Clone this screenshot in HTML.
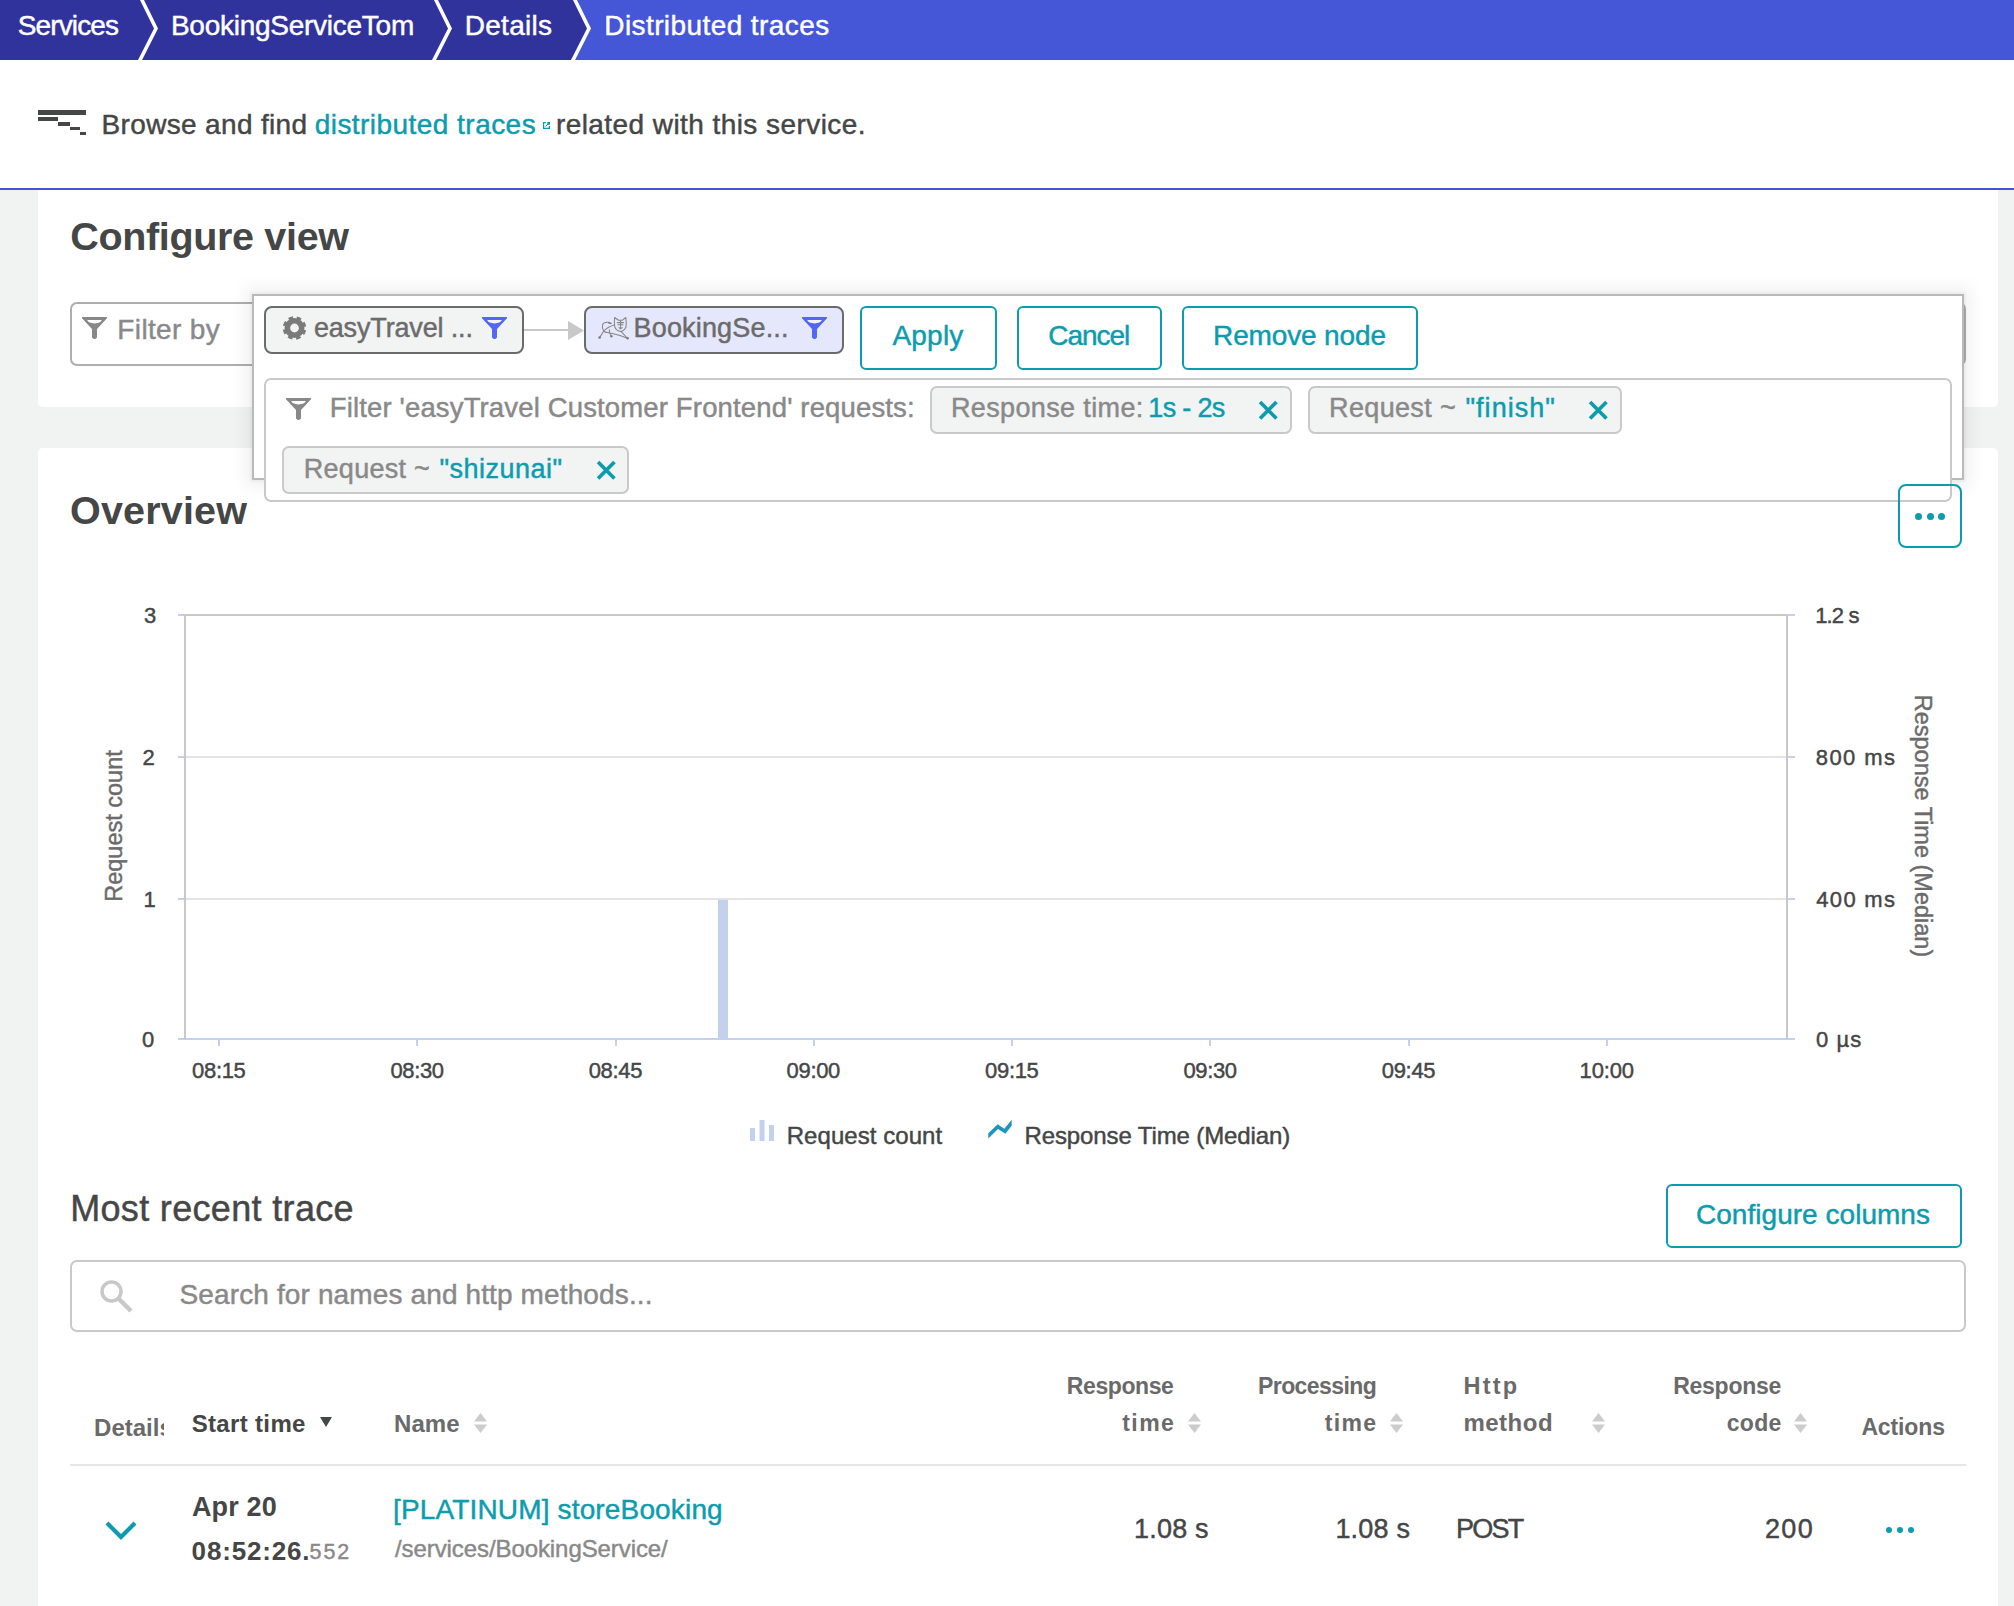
<!DOCTYPE html>
<html><head><meta charset="utf-8"><style>
html,body{margin:0;padding:0}
body{width:2014px;height:1606px;overflow:hidden;position:relative;background:#f1f3f3;font-family:"Liberation Sans", sans-serif}
.t{position:absolute;white-space:nowrap;line-height:1;font-family:"Liberation Sans", sans-serif;-webkit-text-stroke:0.45px currentColor}
.r{position:absolute}
</style></head><body>
<svg class="r" style="left:0;top:0" width="2014" height="60" viewBox="0 0 2014 60">
<rect x="0" y="0" width="2014" height="60" fill="#4556d7"/>
<polygon points="0,0 574,0 589,28.5 572,60 0,60" fill="#31339d"/>
<g fill="none" stroke="#fff" stroke-width="3.6" stroke-linejoin="miter" stroke-miterlimit="10">
<polyline points="141,-2 156,28.5 139,62"/>
<polyline points="435,-2 450,28.5 433,62"/>
<polyline points="574,-2 589,28.5 572,62"/>
</g></svg>
<div class="t" style="left:17.65px;top:12.30px;font-size:28px;color:#fff;letter-spacing:-0.861px;">Services</div>
<div class="t" style="left:170.95px;top:12.30px;font-size:28px;color:#fff;letter-spacing:-0.261px;">BookingServiceTom</div>
<div class="t" style="left:464.75px;top:12.30px;font-size:28px;color:#fff;letter-spacing:0.271px;">Details</div>
<div class="t" style="left:604.25px;top:12.30px;font-size:28px;color:#fff;letter-spacing:0.416px;">Distributed traces</div>
<div class="r" style="left:0px;top:60px;width:2014px;height:128px;background:#fff"></div>
<div class="r" style="left:0px;top:188px;width:2014px;height:2px;background:#4452d3"></div>
<div class="r" style="left:38px;top:110px;width:48px;height:4.700000000000003px;background:#454646"></div>
<div class="r" style="left:38px;top:117.4px;width:20.4px;height:3.299999999999997px;background:#454646"></div>
<div class="r" style="left:58.4px;top:122.3px;width:11.800000000000004px;height:3.299999999999997px;background:#454646"></div>
<div class="r" style="left:70.2px;top:127px;width:10.0px;height:3.3000000000000114px;background:#454646"></div>
<div class="r" style="left:80.2px;top:132px;width:5.799999999999997px;height:3.3000000000000114px;background:#454646"></div>
<div class="t" style="left:101.55px;top:110.80px;font-size:28px;color:#454646;letter-spacing:0.339px;">Browse and find</div>
<div class="t" style="left:314.68px;top:110.80px;font-size:28px;color:#0b9cae;letter-spacing:0.457px;">distributed traces</div>
<div class="t" style="left:555.92px;top:110.80px;font-size:28px;color:#454646;letter-spacing:0.433px;">related with this service.</div>
<svg class="r" style="left:542.5px;top:121.5px" width="7" height="7" viewBox="0 0 7 7"><path d="M2.8 0.6 H0.6 V6.4 H6.4 V4" fill="none" stroke="#0b9cae" stroke-width="1.2"/><path d="M2.5 4.5 L5.5 1.5" stroke="#0b9cae" stroke-width="1"/><rect x="4.3" y="0" width="2.7" height="2.7" fill="#0b9cae"/></svg>
<div class="r" style="left:38px;top:190px;width:1960px;height:217px;background:#fff;border-radius:0 0 5px 5px"></div>
<div class="r" style="left:38px;top:448px;width:1960px;height:1252px;background:#fff;border-radius:5px"></div>
<div class="t" style="left:70.28px;top:216.56px;font-size:39.5px;color:#454646;letter-spacing:-0.338px;font-weight:700;-webkit-text-stroke:0;">Configure view</div>
<div class="r" style="left:70px;top:302px;width:1896px;height:64px;border:2.5px solid #aeaeae;border-radius:7px;box-sizing:border-box;background:#fff"></div>
<svg class="r" style="left:81.8px;top:317px" width="25" height="23" viewBox="0 0 25 23"><path d="M0 0 H25 V1.2 L15 12 V20.5 Q12.5 23.5 10 20.5 V12 L0 1.2 Z" fill="#888"/><path d="M5.2 3 H19.8 Q18.5 6.2 12.5 6.4 Q6.5 6.2 5.2 3 Z" fill="#fff"/></svg>
<div class="t" style="left:117.35px;top:315.90px;font-size:28px;color:#898989;letter-spacing:0.356px;">Filter by</div>
<div class="t" style="left:69.97px;top:490.56px;font-size:39.5px;color:#454646;letter-spacing:0.182px;font-weight:700;-webkit-text-stroke:0;">Overview</div>
<div class="r" style="left:252px;top:294px;width:1712px;height:186px;border:2px solid #b9b9b9;box-sizing:border-box;background:#fff;box-shadow:0 0 2px 2px rgba(0,0,0,0.035), 0 0 16px 7px rgba(0,0,0,0.06)"></div>
<div class="r" style="left:264px;top:306px;width:260px;height:48px;border:2.5px solid #6b6b6b;border-radius:8px;box-sizing:border-box;background:#f2f3f3"></div>
<svg class="r" style="left:281.5px;top:316px" width="25" height="24" viewBox="0 0 25 24"><g transform="translate(12.5,12)" fill="none" stroke="#7a7a7a"><circle r="7.2" stroke-width="5.6"/><circle r="10" stroke-width="3.6" stroke-dasharray="4.4 3.45" stroke-linecap="butt" transform="rotate(10.5)"/></g></svg>
<div class="t" style="left:313.88px;top:314.94px;font-size:27px;color:#6b6b6b;letter-spacing:-0.152px;">easyTravel ...</div>
<svg class="r" style="left:482px;top:316.5px" width="25" height="23" viewBox="0 0 25 23"><path d="M0 0 H25 V1.2 L15 12 V20.5 Q12.5 23.5 10 20.5 V12 L0 1.2 Z" fill="#5366f6"/><path d="M5.2 3 H19.8 Q18.5 6.2 12.5 6.4 Q6.5 6.2 5.2 3 Z" fill="#f2f3f3"/></svg>
<div class="r" style="left:524px;top:329px;width:45px;height:2px;background:#c8c8c8"></div>
<svg class="r" style="left:568px;top:321px" width="17" height="19" viewBox="0 0 17 19"><path d="M0 0 L16 9.5 L0 19 Z" fill="#c8c8c8"/></svg>
<div class="r" style="left:584px;top:306px;width:260px;height:48px;border:2.5px solid #6b6b6b;border-radius:8px;box-sizing:border-box;background:#e5e8fd"></div>
<svg class="r" style="left:590px;top:310px" width="50" height="35" viewBox="0 0 50 35"><g fill="none" stroke="#858585" stroke-width="1.05" stroke-linejoin="round" stroke-linecap="round">
<path d="M24.6 7.5 L28.5 10.2 L32.5 10.2 L35.8 7.5 Q36.6 12.5 36 17 Q34 21 30.8 21.5 Q26.5 21 24.8 17 Q24 12 24.6 7.5 Z"/>
<path d="M27.3 12.6 h6.2 M28 14.8 h5 M29 17.6 L30.6 18.8 L32.2 17.6 M30.6 10.6 V18.5"/>
<path d="M21.3 13.4 L18.8 12.4 Q13.8 11.8 12.6 14.5 Q11.9 18 13.5 20.5 Q14.8 22 16 22.5"/>
<path d="M24.2 15 Q17.5 17 13.8 21 L9.6 27.6"/>
<path d="M15 22 Q22 23 30 25.6 L37.6 28.3"/>
<path d="M31 21.4 L37.2 28"/>
<path d="M19.4 19.8 V22.6 L21.6 26.4"/>
</g><g fill="#7d7d7d"><path d="M18.5 11.6 L22 13.4 L18.5 14 Z"/><circle cx="9.6" cy="27.5" r="1.3"/><circle cx="21.4" cy="26.2" r="1.2"/><circle cx="37.6" cy="28.2" r="1.3"/></g></svg>
<div class="t" style="left:633.55px;top:314.94px;font-size:27px;color:#6b6b6b;letter-spacing:0.166px;">BookingSe...</div>
<svg class="r" style="left:802px;top:316.5px" width="25" height="23" viewBox="0 0 25 23"><path d="M0 0 H25 V1.2 L15 12 V20.5 Q12.5 23.5 10 20.5 V12 L0 1.2 Z" fill="#5366f6"/><path d="M5.2 3 H19.8 Q18.5 6.2 12.5 6.4 Q6.5 6.2 5.2 3 Z" fill="#f2f3f3"/></svg>
<div class="r" style="left:860px;top:306px;width:137px;height:64px;border:2.5px solid #0b9cae;border-radius:6px;box-sizing:border-box;background:#fff"></div>
<div class="t" style="left:892.38px;top:321.90px;font-size:28px;color:#0b9cae;letter-spacing:0.238px;">Apply</div>
<div class="r" style="left:1017px;top:306px;width:145px;height:64px;border:2.5px solid #0b9cae;border-radius:6px;box-sizing:border-box;background:#fff"></div>
<div class="t" style="left:1048.33px;top:322.00px;font-size:28px;color:#0b9cae;letter-spacing:-1.040px;">Cancel</div>
<div class="r" style="left:1182px;top:306px;width:236px;height:64px;border:2.5px solid #0b9cae;border-radius:6px;box-sizing:border-box;background:#fff"></div>
<div class="t" style="left:1213.05px;top:322.00px;font-size:28px;color:#0b9cae;letter-spacing:-0.138px;">Remove node</div>
<div class="r" style="left:264px;top:378px;width:1688px;height:124px;border:2px solid #c9c9c9;border-radius:7px;box-sizing:border-box;background:#fff"></div>
<svg class="r" style="left:285.8px;top:398.4px" width="25" height="23" viewBox="0 0 25 23"><path d="M0 0 H25 V1.2 L15 12 V20.5 Q12.5 23.5 10 20.5 V12 L0 1.2 Z" fill="#888"/><path d="M5.2 3 H19.8 Q18.5 6.2 12.5 6.4 Q6.5 6.2 5.2 3 Z" fill="#fff"/></svg>
<div class="t" style="left:329.75px;top:394.32px;font-size:27.5px;color:#898989;letter-spacing:0.149px;">Filter &#39;easyTravel Customer Frontend&#39; requests:</div>
<div class="r" style="left:930px;top:386px;width:362px;height:48px;border:2px solid #c9c9c9;border-radius:7px;box-sizing:border-box;background:#f2f3f3"></div>
<div class="t" style="left:950.95px;top:395.34px;font-size:27px;color:#898989;letter-spacing:0.371px;">Response time:</div>
<div class="t" style="left:1148.30px;top:395.34px;font-size:27px;color:#0b9cae;letter-spacing:-0.667px;">1s - 2s</div>
<svg class="r" style="left:1257.5px;top:400px" width="20.5" height="20.5" viewBox="0 0 20 20"><path d="M2 2 L18 18 M18 2 L2 18" stroke="#0b9cae" stroke-width="3.6" stroke-linecap="butt"/></svg>
<div class="r" style="left:1308px;top:386px;width:314px;height:48px;border:2px solid #c9c9c9;border-radius:7px;box-sizing:border-box;background:#f2f3f3"></div>
<div class="t" style="left:1329.05px;top:395.34px;font-size:27px;color:#898989;letter-spacing:0.350px;">Request ~</div>
<div class="t" style="left:1465.47px;top:395.34px;font-size:27px;color:#0b9cae;letter-spacing:1.029px;">"finish"</div>
<svg class="r" style="left:1588px;top:400px" width="20.5" height="20.5" viewBox="0 0 20 20"><path d="M2 2 L18 18 M18 2 L2 18" stroke="#0b9cae" stroke-width="3.6" stroke-linecap="butt"/></svg>
<div class="r" style="left:282px;top:446px;width:347px;height:48px;border:2px solid #c9c9c9;border-radius:7px;box-sizing:border-box;background:#f2f3f3"></div>
<div class="t" style="left:303.75px;top:455.64px;font-size:27px;color:#898989;letter-spacing:0.288px;">Request ~</div>
<div class="t" style="left:439.57px;top:455.64px;font-size:27px;color:#0b9cae;letter-spacing:0.467px;">"shizunai"</div>
<svg class="r" style="left:596px;top:460px" width="20.5" height="20.5" viewBox="0 0 20 20"><path d="M2 2 L18 18 M18 2 L2 18" stroke="#0b9cae" stroke-width="3.6" stroke-linecap="butt"/></svg>
<div class="r" style="left:1898px;top:484px;width:64px;height:64px;border:2.5px solid #0b9cae;border-radius:8px;box-sizing:border-box"></div>
<div class="r" style="left:1915.0px;top:512.5px;width:7px;height:7px;border-radius:50%;background:#0b9cae"></div>
<div class="r" style="left:1926.5px;top:512.5px;width:7px;height:7px;border-radius:50%;background:#0b9cae"></div>
<div class="r" style="left:1938.0px;top:512.5px;width:7px;height:7px;border-radius:50%;background:#0b9cae"></div>
<div class="r" style="left:178px;top:614px;width:1617px;height:2px;background:#c9c9c9"></div>
<div class="r" style="left:178px;top:756px;width:1617px;height:2px;background:#e3e3e3"></div>
<div class="r" style="left:178px;top:897.8px;width:1617px;height:2.0px;background:#e3e3e3"></div>
<div class="r" style="left:178px;top:1038px;width:1617px;height:2px;background:#c3d1ee"></div>
<div class="r" style="left:178px;top:613.8px;width:7px;height:2.0px;background:#c3d1ee"></div>
<div class="r" style="left:1787px;top:613.8px;width:8px;height:2.0px;background:#c3d1ee"></div>
<div class="r" style="left:178px;top:756px;width:7px;height:2px;background:#c3d1ee"></div>
<div class="r" style="left:1787px;top:756px;width:8px;height:2px;background:#c3d1ee"></div>
<div class="r" style="left:178px;top:897.8px;width:7px;height:2.0px;background:#c3d1ee"></div>
<div class="r" style="left:1787px;top:897.8px;width:8px;height:2.0px;background:#c3d1ee"></div>
<div class="r" style="left:184px;top:614px;width:2px;height:425px;background:#c9c9c9"></div>
<div class="r" style="left:1786px;top:614px;width:2px;height:425px;background:#c9c9c9"></div>
<div class="r" style="left:718px;top:900px;width:10px;height:138px;background:#c3d1ee"></div>
<div class="r" style="left:218px;top:1040px;width:2px;height:6px;background:#c3d1ee"></div>
<div class="t" style="left:192.12px;top:1059.58px;font-size:22px;color:#454646;letter-spacing:-0.344px;">08:15</div>
<div class="r" style="left:416.3px;top:1040px;width:2.0px;height:6px;background:#c3d1ee"></div>
<div class="t" style="left:390.43px;top:1059.58px;font-size:22px;color:#454646;letter-spacing:-0.344px;">08:30</div>
<div class="r" style="left:614.6px;top:1040px;width:2.0px;height:6px;background:#c3d1ee"></div>
<div class="t" style="left:588.73px;top:1059.58px;font-size:22px;color:#454646;letter-spacing:-0.344px;">08:45</div>
<div class="r" style="left:812.5px;top:1040px;width:2.0px;height:6px;background:#c3d1ee"></div>
<div class="t" style="left:786.62px;top:1059.58px;font-size:22px;color:#454646;letter-spacing:-0.344px;">09:00</div>
<div class="r" style="left:1011px;top:1040px;width:2px;height:6px;background:#c3d1ee"></div>
<div class="t" style="left:985.12px;top:1059.58px;font-size:22px;color:#454646;letter-spacing:-0.344px;">09:15</div>
<div class="r" style="left:1209.3px;top:1040px;width:2.0px;height:6px;background:#c3d1ee"></div>
<div class="t" style="left:1183.42px;top:1059.58px;font-size:22px;color:#454646;letter-spacing:-0.344px;">09:30</div>
<div class="r" style="left:1407.7px;top:1040px;width:2.0px;height:6px;background:#c3d1ee"></div>
<div class="t" style="left:1381.83px;top:1059.58px;font-size:22px;color:#454646;letter-spacing:-0.344px;">09:45</div>
<div class="r" style="left:1606.2px;top:1040px;width:2.0px;height:6px;background:#c3d1ee"></div>
<div class="t" style="left:1579.58px;top:1059.58px;font-size:22px;color:#454646;letter-spacing:-0.156px;">10:00</div>
<div class="t" style="left:144.03px;top:605.18px;font-size:22px;color:#454646;letter-spacing:0.000px;">3</div>
<div class="t" style="left:142.38px;top:747.38px;font-size:22px;color:#454646;letter-spacing:0.000px;">2</div>
<div class="t" style="left:143.38px;top:889.18px;font-size:22px;color:#454646;letter-spacing:0.000px;">1</div>
<div class="t" style="left:142.03px;top:1029.28px;font-size:22px;color:#454646;letter-spacing:0.000px;">0</div>
<div class="t" style="left:1815.17px;top:605.18px;font-size:22px;color:#454646;letter-spacing:-0.869px;">1.2 s</div>
<div class="t" style="left:1815.80px;top:747.38px;font-size:22px;color:#454646;letter-spacing:1.405px;">800 ms</div>
<div class="t" style="left:1816.30px;top:889.18px;font-size:22px;color:#454646;letter-spacing:1.305px;">400 ms</div>
<div class="t" style="left:1815.92px;top:1029.28px;font-size:22px;color:#454646;letter-spacing:1.108px;">0 &micro;s</div>
<div class="t" style="left:-36px;top:814px;width:300px;text-align:center;font-size:23.5px;line-height:24px;color:#6b6b6b;transform:rotate(-90deg)">Request count</div>
<div class="t" style="left:1723px;top:814px;width:400px;text-align:center;font-size:23.5px;line-height:24px;color:#6b6b6b;transform:rotate(90deg)">Response Time (Median)</div>
<svg class="r" style="left:750px;top:1120px" width="25" height="21" viewBox="0 0 25 21"><rect x="0" y="8" width="5" height="13" fill="#c3d1ee"/><rect x="9.5" y="0" width="5" height="21" fill="#c3d1ee"/><rect x="19" y="5" width="5" height="16" fill="#c3d1ee"/></svg>
<div class="t" style="left:786.70px;top:1123.88px;font-size:24px;color:#454646;letter-spacing:0.056px;">Request count</div>
<svg class="r" style="left:980px;top:1110px" width="40" height="40" viewBox="980 1110 40 40"><polygon points="988.3,1138.6 988.3,1133.2 997.7,1124.3 1004.3,1128.8 1011.7,1119.8 1011.7,1125.8 1005.4,1133.8 998,1129.1" fill="#1e94c0"/></svg>
<div class="t" style="left:1024.50px;top:1123.88px;font-size:24px;color:#454646;letter-spacing:-0.115px;">Response Time (Median)</div>
<div class="t" style="left:70.20px;top:1190.93px;font-size:36px;color:#454646;letter-spacing:0.331px;">Most recent trace</div>
<div class="r" style="left:1666px;top:1184px;width:296px;height:64px;border:2.5px solid #0b9cae;border-radius:6px;box-sizing:border-box;background:#fff"></div>
<div class="t" style="left:1696.03px;top:1200.70px;font-size:28px;color:#0b9cae;letter-spacing:0.030px;">Configure columns</div>
<div class="r" style="left:70px;top:1260px;width:1896px;height:72px;border:2px solid #c9c9c9;border-radius:7px;box-sizing:border-box;background:#fff"></div>
<svg class="r" style="left:99px;top:1279px" width="36" height="36" viewBox="0 0 36 36"><circle cx="12.5" cy="12.5" r="9.5" fill="none" stroke="#c8c8c8" stroke-width="3.5"/><path d="M19 19 L32 32" stroke="#c8c8c8" stroke-width="4.5"/></svg>
<div class="t" style="left:179.55px;top:1280.90px;font-size:28px;color:#898989;letter-spacing:0.127px;">Search for names and http methods...</div>
<div class="r" style="left:90px;top:1400px;width:74px;height:50px;overflow:hidden">
<div class="t" style="left:4.08px;top:15.68px;font-size:24px;color:#6a6a6a;letter-spacing:0.000px;font-weight:700;-webkit-text-stroke:0;">Details</div>
</div>
<div class="t" style="left:191.65px;top:1411.68px;font-size:24px;color:#454646;letter-spacing:0.342px;font-weight:700;-webkit-text-stroke:0;">Start time</div>
<svg class="r" style="left:320px;top:1417px" width="12" height="10" viewBox="0 0 12 10"><path d="M0 0 H12 L6 10 Z" fill="#454646"/></svg>
<div class="t" style="left:394.07px;top:1411.68px;font-size:24px;color:#6a6a6a;letter-spacing:0.042px;font-weight:700;-webkit-text-stroke:0;">Name</div>
<svg class="r" style="left:474px;top:1412.5px" width="13" height="20" viewBox="0 0 13 20"><path d="M6.5 0 L13 8.5 H0 Z M0 11.5 H13 L6.5 20 Z" fill="#cccccc"/></svg>
<div class="t" style="left:1066.80px;top:1374.93px;font-size:23px;color:#6a6a6a;letter-spacing:-0.404px;font-weight:700;-webkit-text-stroke:0;">Response</div>
<div class="t" style="left:1122.25px;top:1411.83px;font-size:23px;color:#6a6a6a;letter-spacing:1.450px;font-weight:700;-webkit-text-stroke:0;">time</div>
<svg class="r" style="left:1188px;top:1412.5px" width="13" height="20" viewBox="0 0 13 20"><path d="M6.5 0 L13 8.5 H0 Z M0 11.5 H13 L6.5 20 Z" fill="#cccccc"/></svg>
<div class="t" style="left:1258.00px;top:1374.93px;font-size:23px;color:#6a6a6a;letter-spacing:-0.578px;font-weight:700;-webkit-text-stroke:0;">Processing</div>
<div class="t" style="left:1324.75px;top:1411.83px;font-size:23px;color:#6a6a6a;letter-spacing:1.350px;font-weight:700;-webkit-text-stroke:0;">time</div>
<svg class="r" style="left:1390px;top:1412.5px" width="13" height="20" viewBox="0 0 13 20"><path d="M6.5 0 L13 8.5 H0 Z M0 11.5 H13 L6.5 20 Z" fill="#cccccc"/></svg>
<div class="t" style="left:1463.50px;top:1374.51px;font-size:23.5px;color:#6a6a6a;letter-spacing:2.233px;font-weight:700;-webkit-text-stroke:0;">Http</div>
<div class="t" style="left:1463.38px;top:1410.98px;font-size:24px;color:#6a6a6a;letter-spacing:0.520px;font-weight:700;-webkit-text-stroke:0;">method</div>
<svg class="r" style="left:1592px;top:1412.5px" width="13" height="20" viewBox="0 0 13 20"><path d="M6.5 0 L13 8.5 H0 Z M0 11.5 H13 L6.5 20 Z" fill="#cccccc"/></svg>
<div class="t" style="left:1673.20px;top:1374.93px;font-size:23px;color:#6a6a6a;letter-spacing:-0.261px;font-weight:700;-webkit-text-stroke:0;">Response</div>
<div class="t" style="left:1726.72px;top:1411.83px;font-size:23px;color:#6a6a6a;letter-spacing:0.300px;font-weight:700;-webkit-text-stroke:0;">code</div>
<svg class="r" style="left:1794px;top:1412.5px" width="13" height="20" viewBox="0 0 13 20"><path d="M6.5 0 L13 8.5 H0 Z M0 11.5 H13 L6.5 20 Z" fill="#cccccc"/></svg>
<div class="t" style="left:1861.38px;top:1416.03px;font-size:23px;color:#6a6a6a;letter-spacing:-0.125px;font-weight:700;-webkit-text-stroke:0;">Actions</div>
<div class="r" style="left:70px;top:1464px;width:1896px;height:2px;background:#e6e6e6"></div>
<svg class="r" style="left:105px;top:1520px" width="32" height="20" viewBox="0 0 32 20"><path d="M2 3 L16 17 L30 3" fill="none" stroke="#0b9cae" stroke-width="4.2"/></svg>
<div class="t" style="left:191.97px;top:1493.74px;font-size:27px;color:#454646;letter-spacing:0.150px;font-weight:700;-webkit-text-stroke:0;">Apr 20</div>
<div class="t" style="left:191.60px;top:1538.19px;font-size:26px;color:#454646;letter-spacing:0.834px;font-weight:700;-webkit-text-stroke:0;">08:52:26.</div>
<div class="t" style="left:309.43px;top:1542.00px;font-size:21.5px;color:#898989;letter-spacing:2.012px;">552</div>
<div class="t" style="left:393.00px;top:1496.00px;font-size:28px;color:#0b9cae;letter-spacing:0.155px;">[PLATINUM] storeBooking</div>
<div class="t" style="left:395.00px;top:1537.08px;font-size:24px;color:#898989;letter-spacing:-0.085px;">/services/BookingService/</div>
<div class="t" style="left:1134.00px;top:1516.14px;font-size:27px;color:#454646;letter-spacing:0.200px;">1.08 s</div>
<div class="t" style="left:1335.40px;top:1516.14px;font-size:27px;color:#454646;letter-spacing:0.200px;">1.08 s</div>
<div class="t" style="left:1455.95px;top:1516.14px;font-size:27px;color:#454646;letter-spacing:-1.708px;">POST</div>
<div class="t" style="left:1765.03px;top:1516.14px;font-size:27px;color:#454646;letter-spacing:1.337px;">200</div>
<div class="r" style="left:1885.8px;top:1526.8px;width:6.4px;height:6.4px;border-radius:50%;background:#0b9cae"></div>
<div class="r" style="left:1896.8px;top:1526.8px;width:6.4px;height:6.4px;border-radius:50%;background:#0b9cae"></div>
<div class="r" style="left:1907.8px;top:1526.8px;width:6.4px;height:6.4px;border-radius:50%;background:#0b9cae"></div>
</body></html>
